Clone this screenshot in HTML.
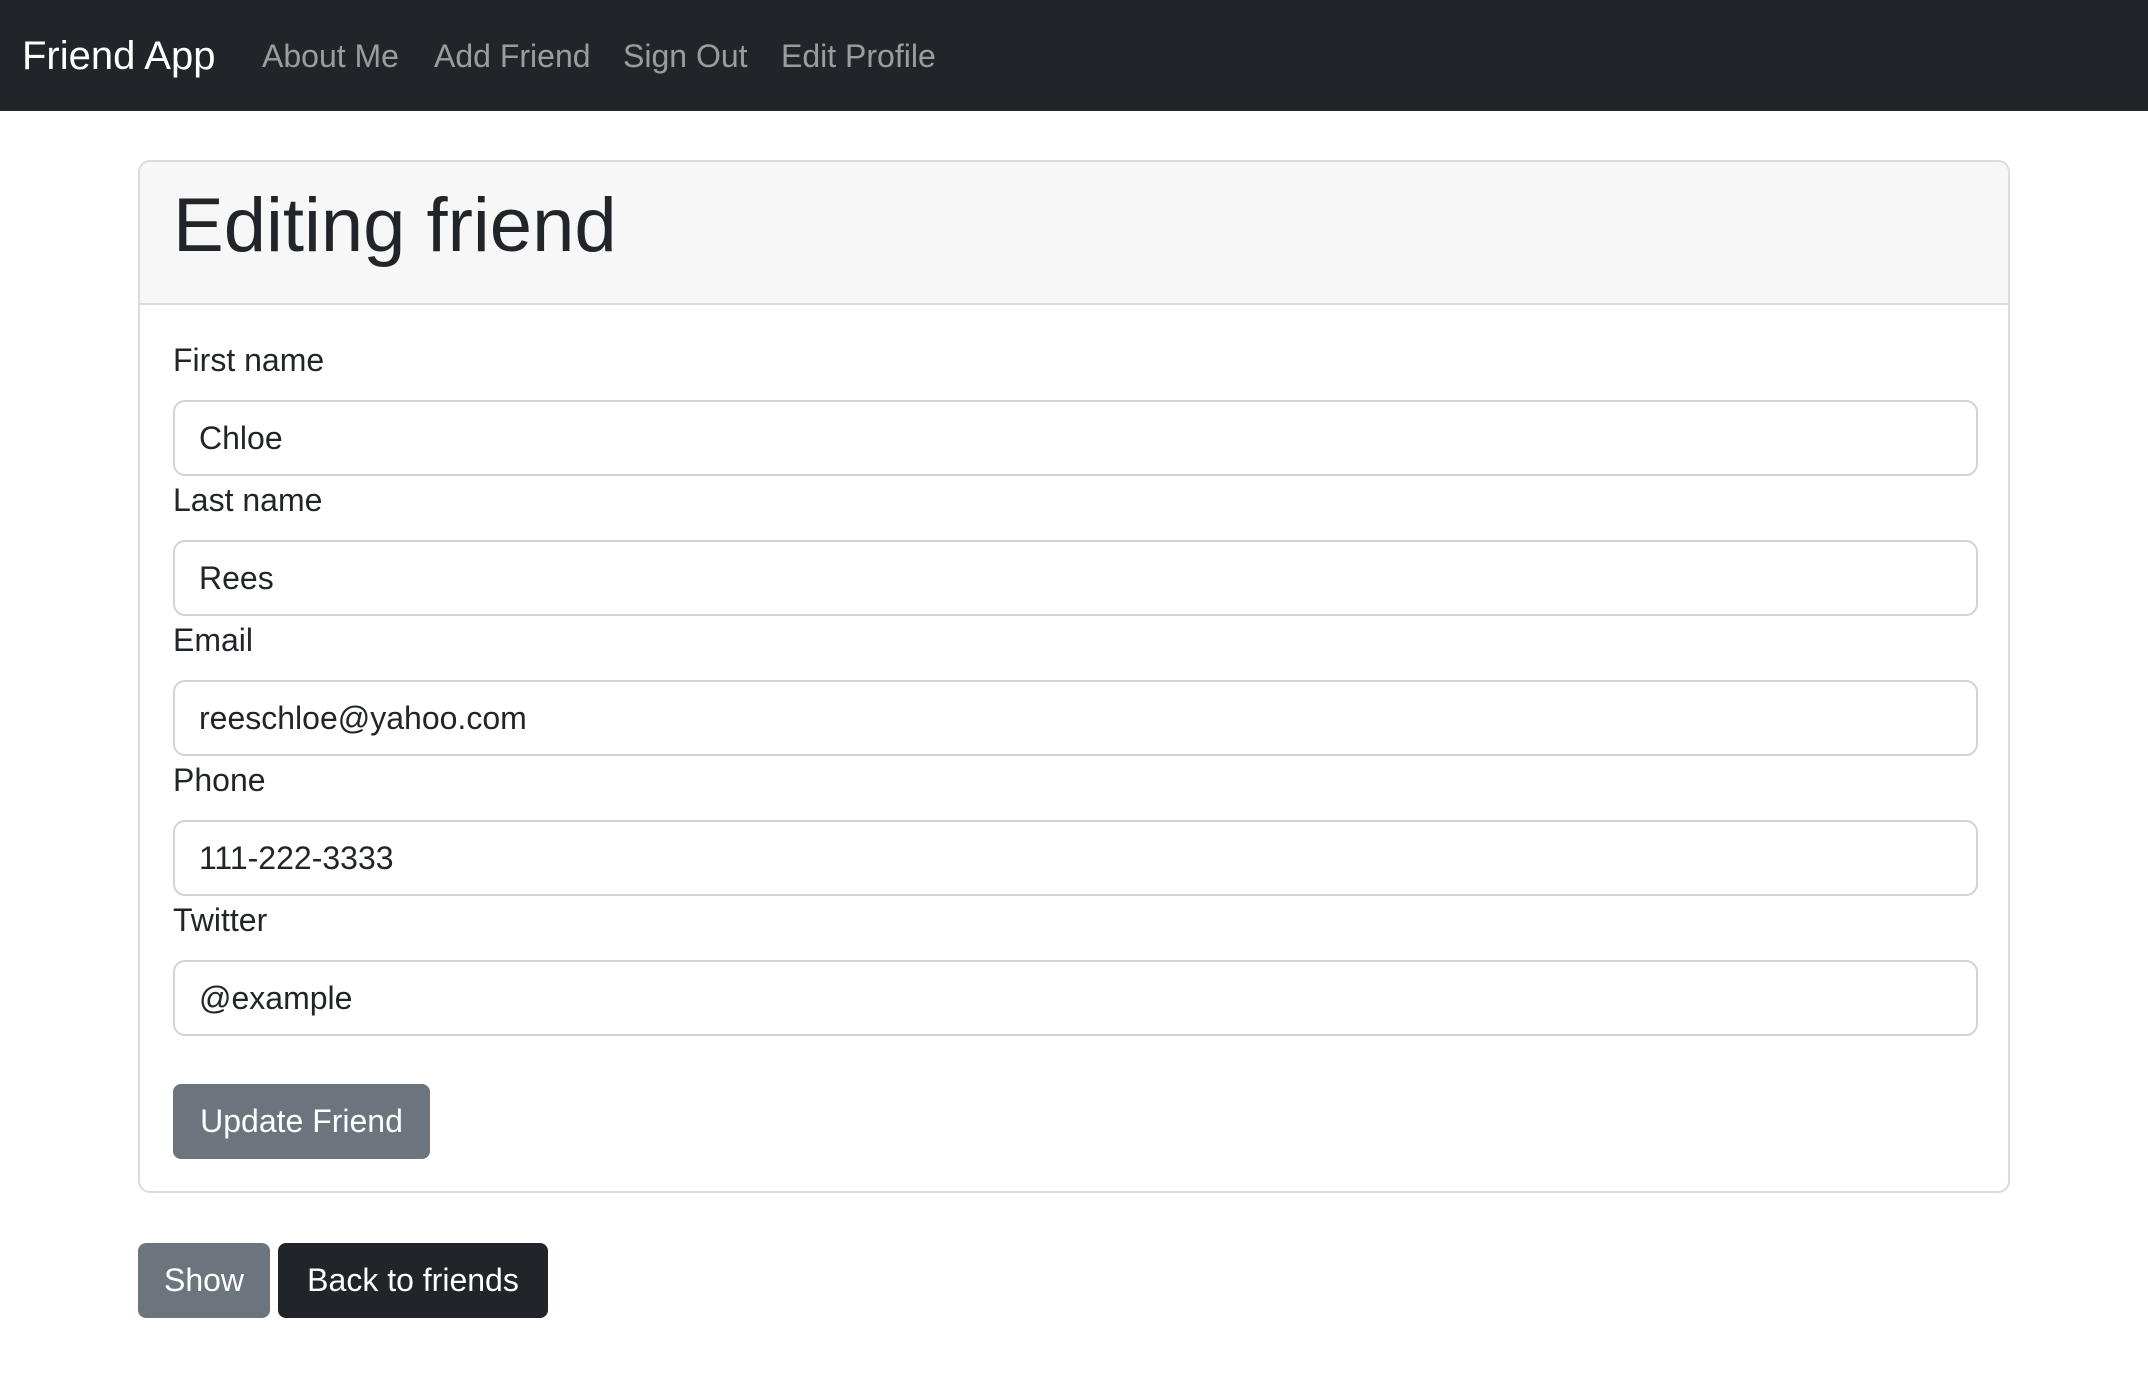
<!DOCTYPE html>
<html><head><meta charset="utf-8"><style>
*{box-sizing:border-box;margin:0;padding:0}
body{width:2148px;height:1378px;background:#fff;font-family:"Liberation Sans",Arial,sans-serif;color:#212529;overflow:hidden;position:relative}
.nav{position:absolute;left:0;top:0;width:2148px;height:111px;background:#212529}
.nav span{position:absolute;top:0;line-height:112px;font-size:32px;color:rgba(255,255,255,.55)}
.nav .brand{left:22px;font-size:40px;color:#fff}
.card{position:absolute;left:138px;top:160px;width:1872px;height:1033px;border:2px solid #dcdcdc;border-radius:12px;overflow:hidden}
.hdr{height:143px;background:#f7f7f7;border-bottom:2px solid #dcdcdc;padding-left:33px}
.hdr h1{font-size:76px;font-weight:500;line-height:128px;letter-spacing:0px}
.body{padding:31px 33px 0 33px}
label{display:block;font-size:32px;line-height:48px;height:48px;margin-bottom:16px}
.inp{height:76px;border:2px solid #ced4da;border-radius:12px;font-size:32px;line-height:72px;padding-left:24px;width:1805px}
.btn{position:absolute;height:75px;line-height:75px;font-size:32px;color:#fff;border-radius:8px;text-align:center}
</style></head><body>
<div class="nav">
<span class="brand">Friend App</span>
<span style="left:262px">About Me</span>
<span style="left:434px">Add Friend</span>
<span style="left:623px">Sign Out</span>
<span style="left:781px">Edit Profile</span>
</div>
<div class="card">
<div class="hdr"><h1>Editing friend</h1></div>
<div class="body">
<label>First name</label><div class="inp">Chloe</div>
<label>Last name</label><div class="inp">Rees</div>
<label>Email</label><div class="inp">reeschloe@yahoo.com</div>
<label>Phone</label><div class="inp">111-222-3333</div>
<label>Twitter</label><div class="inp">@example</div>
</div>
</div>
<div class="btn" style="left:173px;top:1084px;width:257px;background:#6c757d">Update Friend</div>
<div class="btn" style="left:138px;top:1243px;width:132px;background:#6c757d">Show</div>
<div class="btn" style="left:278px;top:1243px;width:270px;background:#212529">Back to friends</div>
</body></html>
